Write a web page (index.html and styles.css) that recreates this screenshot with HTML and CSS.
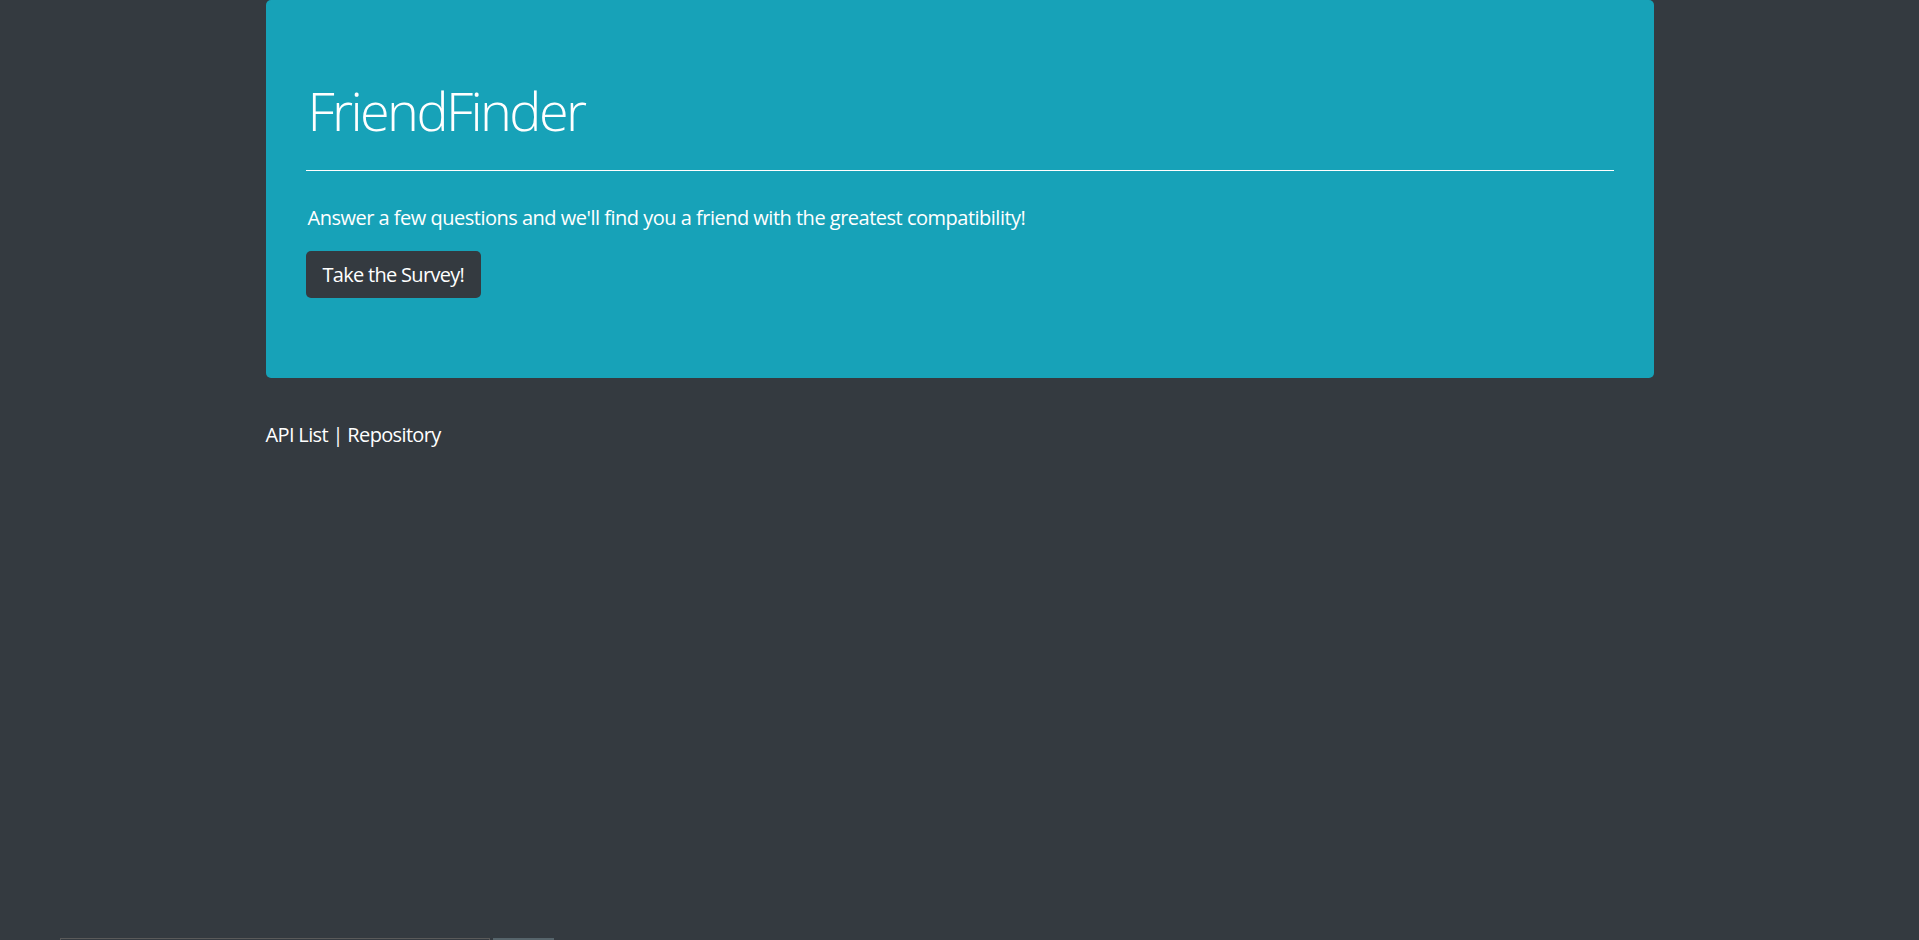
FILE: index.html
```html
<!DOCTYPE html>
<html lang="en">
<head>
<meta charset="utf-8">
<title>FriendFinder</title>
<link rel="stylesheet" href="styles.css">
</head>
<body>
<div class="container">
  <div class="jumbotron">
    <h1 class="display">FriendFinder</h1>
    <hr class="divider">
    <p class="lead">Answer a few questions and we'll find you a friend with the greatest compatibility!</p>
    <a class="btn" href="#">Take the Survey!</a>
  </div>
  <footer class="footer">
    <a class="footer-link" href="#">API List</a> | <a class="footer-link" href="#">Repository</a>
  </footer>
</div>
<div class="peek">
  <span class="peek-input"></span>
  <span class="peek-btn"></span>
</div>
</body>
</html>
```
FILE: styles.css
```css
html, body {
  margin: 0;
  padding: 0;
}
body {
  background: #343a40;
  color: #ffffff;
  font-family: "Open Sans", "Noto Sans", "Liberation Sans", sans-serif;
  min-height: 940px;
}
.container {
  width: 1388px;
  margin: 0 auto;
}
.jumbotron {
  background: #17a2b8;
  border-radius: 5px;
  padding: 77px 40px 80px 40px;
}
.display {
  margin: 0;
  font-size: 54px;
  font-weight: 300;
  line-height: 67px;
  letter-spacing: -2.6px;
  padding-left: 2px;
}
.divider {
  margin: 26px 0 0 0;
  border: 0;
  border-top: 1px solid #ffffff;
  height: 0;
}
.lead {
  margin: 32px 0 18px 0;
  font-size: 20px;
  font-weight: 400;
  line-height: 30px;
  letter-spacing: -0.5px;
  padding-left: 2px;
}
.btn {
  display: inline-block;
  background: #343a40;
  color: #ffffff;
  text-decoration: none;
  font-size: 20px;
  line-height: 30px;
  padding: 9px 17px 8px 17px;
  border-radius: 5px;
  letter-spacing: -0.7px;
}
.footer {
  margin-top: 42px;
  font-size: 20px;
  line-height: 30px;
  letter-spacing: -0.65px;
}
.footer-link {
  color: #ffffff;
  text-decoration: none;
}
.peek {
  position: fixed;
  left: 60px;
  bottom: 0;
  display: flex;
  gap: 3px;
  height: 2px;
}
.peek-input {
  width: 430px;
  border-top: 1px solid #5a5a5a;
  border-left: 1px solid #5a5a5a;
  border-right: 1px solid #5a5a5a;
  box-sizing: border-box;
}
.peek-btn {
  width: 61px;
  background: #56646b;
}
```
